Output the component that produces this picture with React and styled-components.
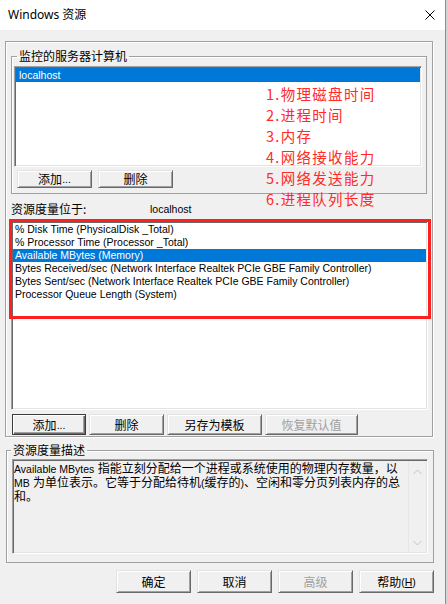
import React from 'react';
import styled, { createGlobalStyle } from 'styled-components';

const GlobalStyle = createGlobalStyle`
  html, body {
    margin: 0;
    padding: 0;
    background: #d4d4d4;
  }
  * {
    box-sizing: border-box;
  }
  body {
    font-family: "Liberation Sans", "Noto Sans CJK SC", sans-serif;
    color: #000;
  }
`;

const monitorRows = ['localhost'];

const counterRows = [
  '% Disk Time (PhysicalDisk _Total)',
  '% Processor Time (Processor _Total)',
  'Available MBytes (Memory)',
  'Bytes Received/sec (Network Interface Realtek PCIe GBE Family Controller)',
  'Bytes Sent/sec (Network Interface Realtek PCIe GBE Family Controller)',
  'Processor Queue Length (System)',
];

const notes = [
  '1.物理磁盘时间',
  '2.进程时间',
  '3.内存',
  '4.网络接收能力',
  '5.网络发送能力',
  '6.进程队列长度',
];

const App = () => {
  return (
    <>
      <GlobalStyle />
      <Window>
        <TitleBar>
          <Title>Windows 资源</Title>
          <CloseIcon viewBox="0 0 10 10">
            <path d="M0.5 0.5 L9.5 9.5 M9.5 0.5 L0.5 9.5" stroke="#000" strokeWidth="1" />
          </CloseIcon>
        </TitleBar>

        <Panel>
          <GroupBox $width={416} $top={7}>
            <Legend $left={5}>监控的服务器计算机</Legend>
            <GroupInner $pad="3px 4px 5px 2px">
              <ListBox $height={101}>
                {monitorRows.map((r) => (
                  <Row key={r} $selected $h={14} $pad={3}>
                    {r}
                  </Row>
                ))}
              </ListBox>
              <ButtonRow $top={3} $left={3} $gap={6}>
                <Button $w={75} $h={18}>添加<Latin>...</Latin></Button>
                <Button $w={75} $h={18}>删除</Button>
              </ButtonRow>
            </GroupInner>
          </GroupBox>

          <LocationRow>
            <LocationLabel>资源度量位于:</LocationLabel>
            <Latin>localhost</Latin>
          </LocationRow>

          <ListBox $height={189} $width={417} $top={5}>
            {counterRows.map((r, i) => (
              <Row key={r} $selected={i === 2} $h={13} $pad={2}>
                {r}
              </Row>
            ))}
          </ListBox>

          <ButtonRow $top={4} $left={1} $gap={3}>
            <Button $w={74} $h={21} $default>添加<Latin>...</Latin></Button>
            <Button $w={75} $h={21}>删除</Button>
            <Button $w={95} $h={21}>另存为模板</Button>
            <Button $w={93} $h={21} disabled>恢复默认值</Button>
          </ButtonRow>

          <Highlight />
        </Panel>

        <GroupBox $width={428} $top={6} $left={6}>
          <Legend $left={4}>资源度量描述</Legend>
          <GroupInner $pad="2px 5px 8px 5px">
            <DescBox>
              <DescText>
                <Latin>Available MBytes</Latin> 指能立刻分配给一个进程或系统使用的物理内存数量，以
                <br />
                <Latin>MB</Latin> 为单位表示。它等于分配给待机<Latin>(</Latin>缓存的<Latin>)</Latin>、空闲和零分页列表内存的总
                <br />
                和。
              </DescText>
              <ScrollBar>
                <svg width="9" height="6" viewBox="0 0 9 6">
                  <path d="M0.5 5 L4.5 1 L8.5 5" fill="none" stroke="#c4c4c4" strokeWidth="1" />
                </svg>
                <svg width="9" height="6" viewBox="0 0 9 6">
                  <path d="M0.5 1 L4.5 5 L8.5 1" fill="none" stroke="#c4c4c4" strokeWidth="1" />
                </svg>
              </ScrollBar>
            </DescBox>
          </GroupInner>
        </GroupBox>

        <Footer>
          <Button $w={75} $h={23}>确定</Button>
          <Button $w={75} $h={23}>取消</Button>
          <Button $w={75} $h={23} disabled>高级</Button>
          <Button $w={75} $h={23}>
            帮助<Latin>(<u>H</u>)</Latin>
          </Button>
        </Footer>

        <Notes>
          {notes.map((n) => (
            <li key={n}>{n}</li>
          ))}
        </Notes>
      </Window>
    </>
  );
};

export default App;

const Window = styled.div`
  position: relative;
  width: 446px;
  height: 604px;
  background: #f0f0f0;
  border-right: 1px solid #8c8c8c;
  display: flex;
  flex-direction: column;
  font-size: 12px;
`;

const TitleBar = styled.div`
  height: 30px;
  flex: none;
  background: #fff;
  display: flex;
  align-items: center;
  justify-content: space-between;
  padding: 0 10px 1px 8px;
`;

const Title = styled.span`
  font-family: "Noto Sans", "Noto Sans CJK SC", sans-serif;
  font-size: 12px;
  line-height: 16px;
`;

const CloseIcon = styled.svg`
  width: 10px;
  height: 10px;
`;

const Panel = styled.div`
  position: relative;
  margin: 11px 0 0 5px;
  width: 428px;
  height: 396px;
  flex: none;
  border: 1px solid #a0a0a0;
  box-shadow: inset 1px 1px 0 #fff, 1px 1px 0 #fff;
  padding: 0 0 0 5px;
  display: flex;
  flex-direction: column;
`;

const GroupBox = styled.fieldset`
  margin: ${(p) => p.$top}px 0 0 ${(p) => p.$left || 0}px;
  padding: 0;
  width: ${(p) => p.$width}px;
  min-width: 0;
  flex: none;
  border: 1px solid #a0a0a0;
  box-shadow: inset 1px 1px 0 #fff;
`;

const Legend = styled.legend`
  margin-left: ${(p) => p.$left}px;
  padding: 0 2px;
  font-family: "Noto Sans CJK SC", sans-serif;
  font-size: 12px;
  line-height: 14px;
`;

const GroupInner = styled.div`
  padding: ${(p) => p.$pad};
  display: flex;
  flex-direction: column;
`;

const ListBox = styled.div`
  height: ${(p) => p.$height}px;
  ${(p) => (p.$width ? `width: ${p.$width}px;` : '')}
  margin-top: ${(p) => p.$top || 0}px;
  flex: none;
  background: #fff;
  border: 1px solid;
  border-color: #a0a0a0 #fff #fff #a0a0a0;
  box-shadow: inset 1px 1px 0 #696969, inset -1px -1px 0 #e3e3e3;
  padding: 1px;
  overflow: hidden;
`;

const Row = styled.div`
  height: ${(p) => p.$h}px;
  line-height: ${(p) => p.$h}px;
  padding-left: ${(p) => p.$pad}px;
  font-family: "Liberation Sans", sans-serif;
  font-size: 10.5px;
  white-space: nowrap;
  background: ${(p) => (p.$selected ? '#0078d7' : 'transparent')};
  color: ${(p) => (p.$selected ? '#fff' : '#000')};
`;

const ButtonRow = styled.div`
  display: flex;
  gap: ${(p) => p.$gap}px;
  margin-top: ${(p) => p.$top}px;
  margin-left: ${(p) => p.$left}px;
`;

const Button = styled.button`
  width: ${(p) => p.$w}px;
  height: ${(p) => p.$h}px;
  flex: none;
  padding: 0;
  margin: 0;
  background: #f0f0f0;
  font-family: "Noto Sans CJK SC", sans-serif;
  font-size: 12px;
  line-height: 14px;
  color: ${(p) => (p.disabled ? '#a0a0a0' : '#000')};
  border: 1px solid;
  border-color: ${(p) =>
    p.$default ? '#3c3c3c' : '#e3e3e3 #696969 #696969 #e3e3e3'};
  box-shadow: ${(p) =>
    p.$default
      ? 'inset 1px 1px 0 #fff, inset -1px -1px 0 #696969, inset -2px -2px 0 #a0a0a0'
      : 'inset 1px 1px 0 #fff, inset -1px -1px 0 #a0a0a0'};
  display: flex;
  align-items: center;
  justify-content: center;
`;

const Latin = styled.span`
  font-family: "Liberation Sans", sans-serif;
  font-size: 10.5px;
`;

const LocationRow = styled.div`
  margin-top: 8px;
  height: 14px;
  line-height: 14px;
  display: flex;
  align-items: center;
`;

const LocationLabel = styled.span`
  width: 139px;
  font-family: "Noto Sans CJK SC", sans-serif;
  font-size: 12px;
`;

const Highlight = styled.div`
  position: absolute;
  left: 3px;
  top: 177px;
  width: 422px;
  height: 100px;
  border: 3px solid #ff1f1f;
  pointer-events: none;
`;

const DescBox = styled.div`
  height: 95px;
  display: flex;
  background: #f0f0f0;
  border: 1px solid;
  border-color: #a0a0a0 #fff #fff #a0a0a0;
  box-shadow: inset 1px 1px 0 #696969, inset -1px -1px 0 #e3e3e3;
  padding: 1px;
`;

const DescText = styled.div`
  flex: 1;
  padding: 1px 0 0 0;
  font-family: "Liberation Sans", "Noto Sans CJK SC", sans-serif;
  font-size: 12px;
  line-height: 14px;
  white-space: nowrap;
  overflow: hidden;
`;

const ScrollBar = styled.div`
  width: 18px;
  flex: none;
  border-left: 1px solid #e6e6e6;
  display: flex;
  flex-direction: column;
  align-items: center;
  justify-content: space-between;
  padding: 8px 0 6px;
`;

const Footer = styled.div`
  display: flex;
  justify-content: flex-end;
  gap: 6px;
  margin-top: 7px;
  padding-right: 11px;
`;

const Notes = styled.ul`
  position: absolute;
  left: 266px;
  top: 83px;
  margin: 0;
  padding: 0;
  list-style: none;
  color: #ff2a2a;
  font-family: "Noto Sans CJK SC", sans-serif;
  font-size: 14.5px;
  letter-spacing: 1.3px;
  line-height: 21px;
  pointer-events: none;

  & li {
    height: 21px;
  }
`;
